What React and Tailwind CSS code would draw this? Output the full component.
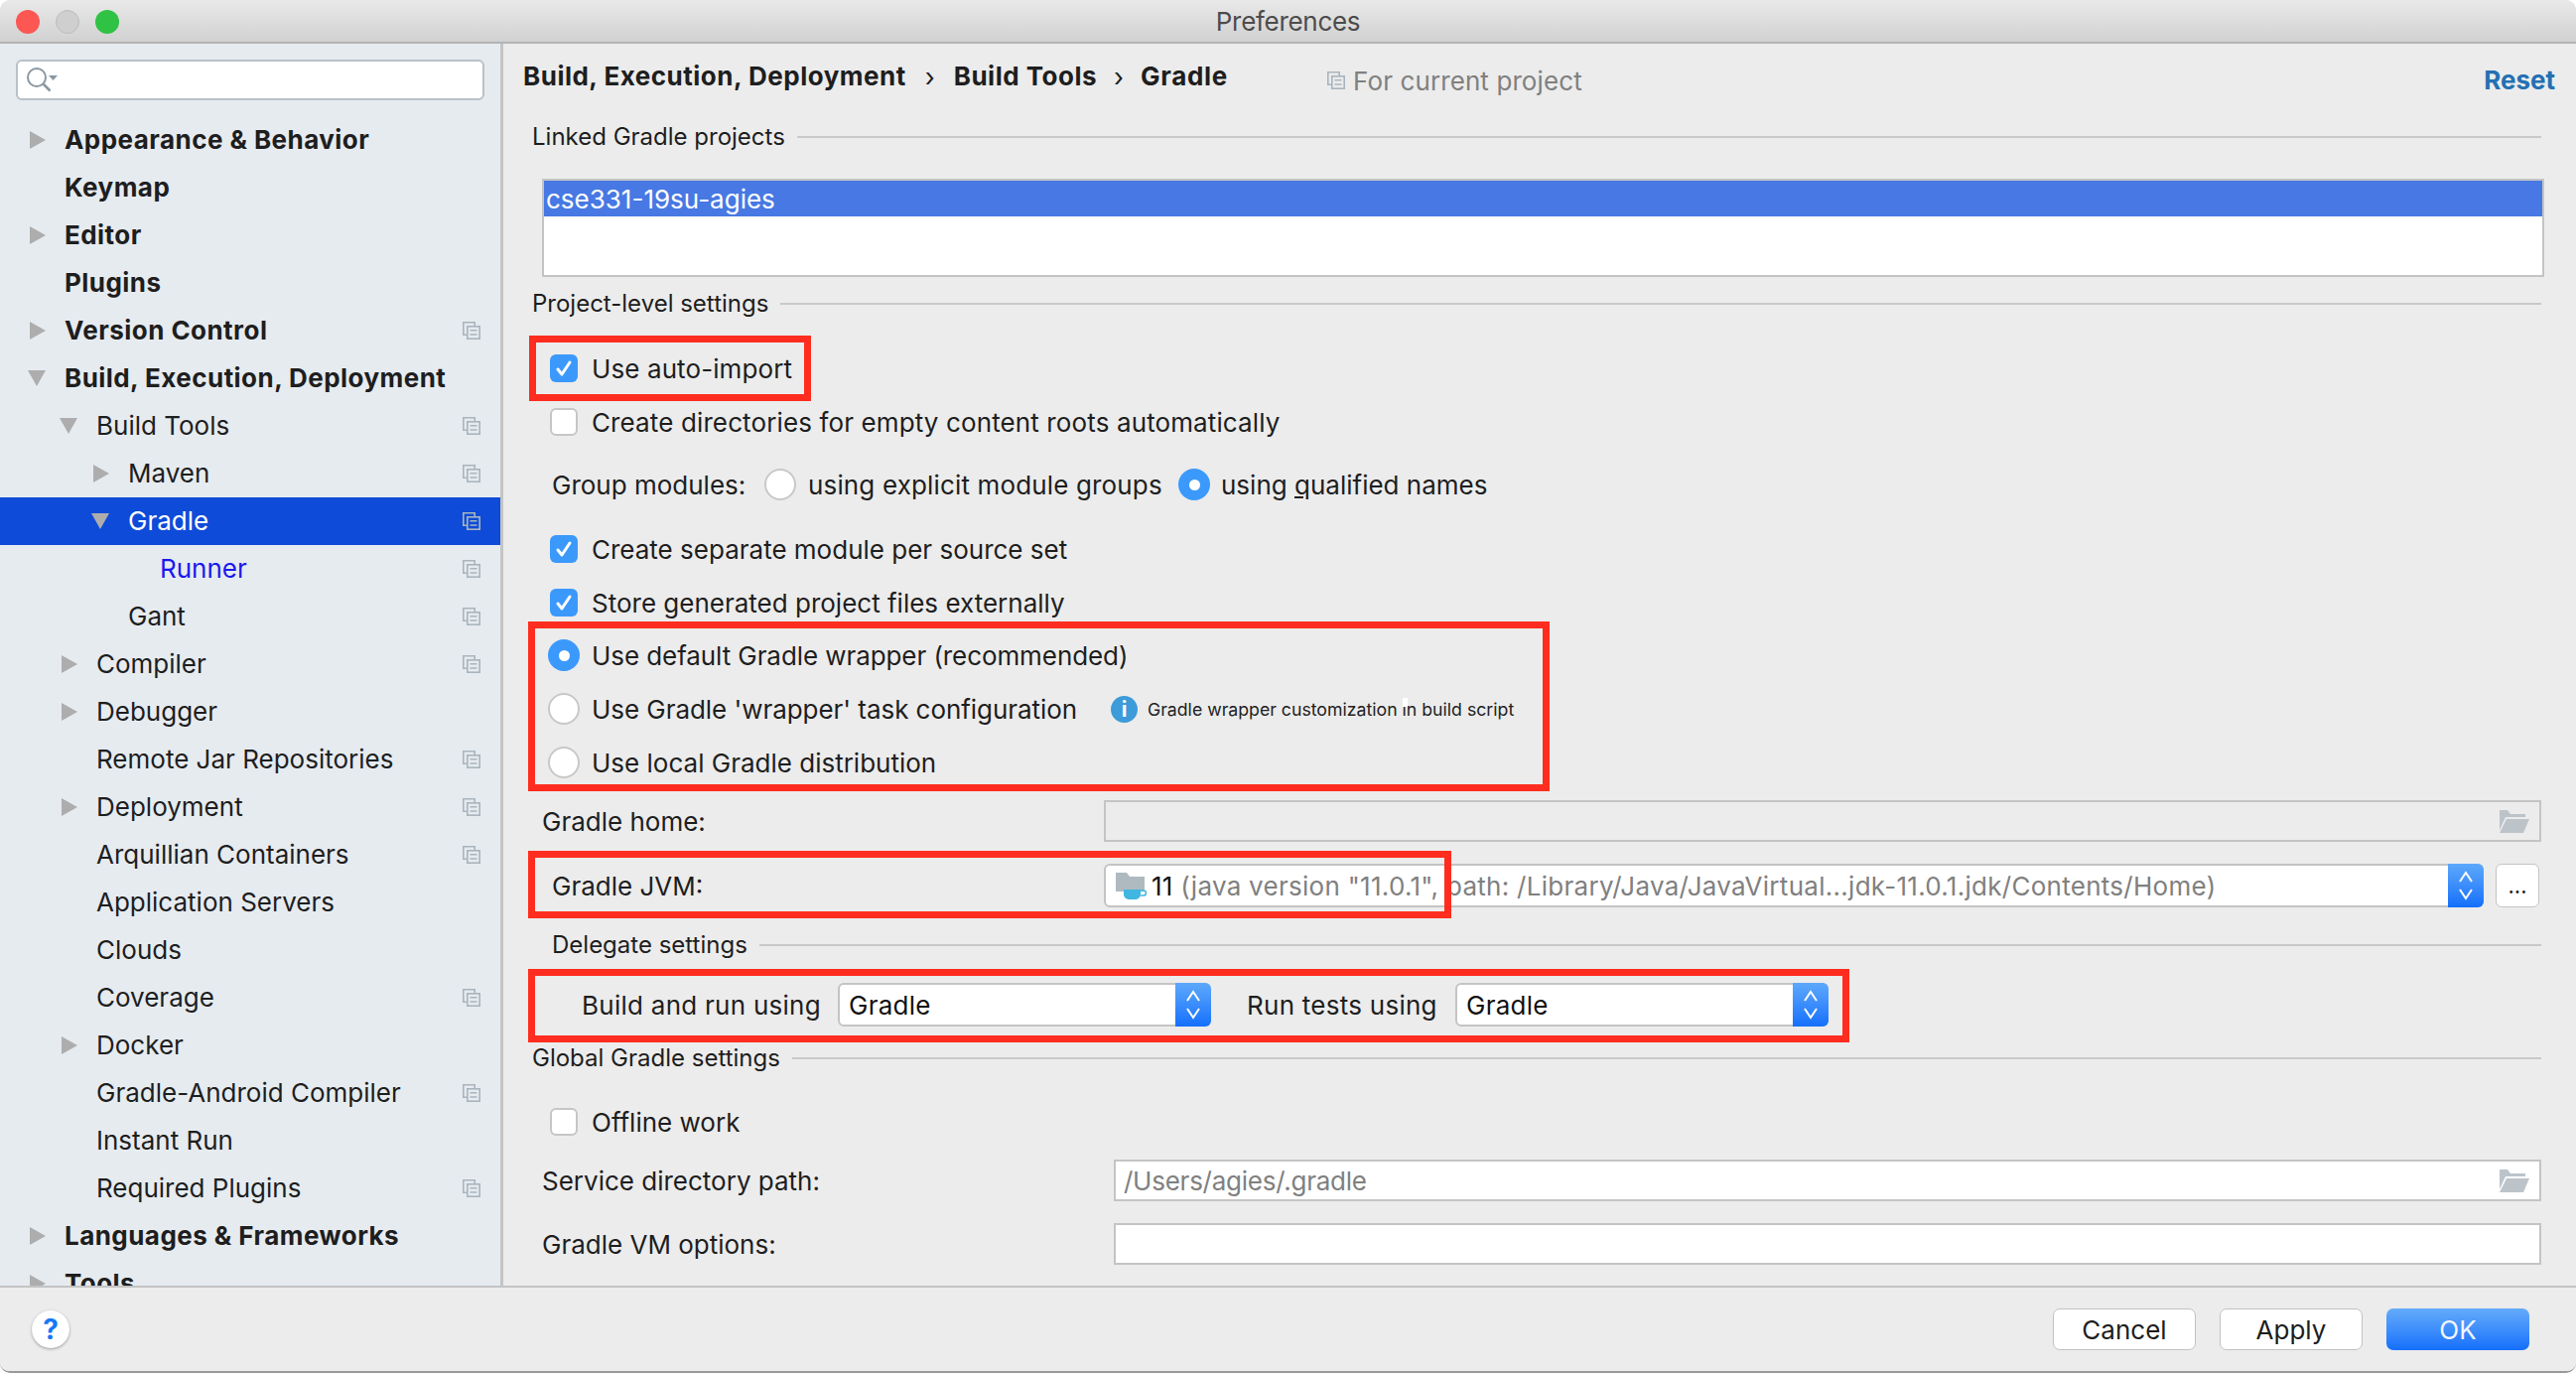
import React from "react";

const TREE = [
  { label: "Appearance & Behavior", level: 0, bold: true, arrow: "right" },
  { label: "Keymap", level: 0, bold: true },
  { label: "Editor", level: 0, bold: true, arrow: "right" },
  { label: "Plugins", level: 0, bold: true },
  { label: "Version Control", level: 0, bold: true, arrow: "right", copy: true },
  { label: "Build, Execution, Deployment", level: 0, bold: true, arrow: "down" },
  { label: "Build Tools", level: 1, arrow: "down", copy: true },
  { label: "Maven", level: 2, arrow: "right", copy: true },
  { label: "Gradle", level: 2, arrow: "down", copy: true, selected: true },
  { label: "Runner", level: 3, copy: true, link: true },
  { label: "Gant", level: 2, copy: true },
  { label: "Compiler", level: 1, arrow: "right", copy: true },
  { label: "Debugger", level: 1, arrow: "right" },
  { label: "Remote Jar Repositories", level: 1, copy: true },
  { label: "Deployment", level: 1, arrow: "right", copy: true },
  { label: "Arquillian Containers", level: 1, copy: true },
  { label: "Application Servers", level: 1 },
  { label: "Clouds", level: 1 },
  { label: "Coverage", level: 1, copy: true },
  { label: "Docker", level: 1, arrow: "right" },
  { label: "Gradle-Android Compiler", level: 1, copy: true },
  { label: "Instant Run", level: 1 },
  { label: "Required Plugins", level: 1, copy: true },
  { label: "Languages & Frameworks", level: 0, bold: true, arrow: "right" },
  { label: "Tools", level: 0, bold: true, arrow: "right" },
];

const INDENT = ["pl-[28px]", "pl-[60px]", "pl-[92px]", "pl-[124px]"];

function CopyIcon({ className = "" }) {
  return (
    <svg width="18" height="18" viewBox="0 0 18 18" fill="none" stroke="#a9b5be" strokeWidth="1.6" className={className}>
      <path d="M4.5 13.2H.8V.8h11.4v3.7" />
      <rect x="4.8" y="4.8" width="12.4" height="12.4" />
      <path d="M7.5 8.8h7M7.5 13h7" />
    </svg>
  );
}

function Arrow({ dir }) {
  if (dir === "right") {
    return (
      <svg width="16" height="18" viewBox="0 0 16 18" className="ml-[2px]">
        <path d="M0 0l16 9-16 9z" fill="#adadad" />
      </svg>
    );
  }
  return (
    <svg width="18" height="16" viewBox="0 0 18 16">
      <path d="M0 0h18L9 16z" fill="#adadad" />
    </svg>
  );
}

function TreeRow({ item }) {
  let tone = "text-[#1e1e1e]";
  if (item.selected) tone = "bg-[#0e4bd8] text-white";
  if (item.link) tone = "text-[#1a1aee]";
  return (
    <div className={`flex h-[48px] shrink-0 items-center pr-[20px] ${INDENT[item.level]} ${tone}`}>
      <div className="flex w-[37px] shrink-0 items-center">{item.arrow && <Arrow dir={item.arrow} />}</div>
      <span className={`flex-1 pb-[2px] text-[26px] whitespace-nowrap ${item.bold ? "font-bold tracking-[0.45px]" : ""}`}>{item.label}</span>
      {item.copy && <CopyIcon />}
    </div>
  );
}

function Checkbox({ checked }) {
  if (!checked) {
    return <div className="h-[28px] w-[28px] shrink-0 rounded-[6px] border-2 border-[#c6c6c6] bg-white" />;
  }
  return (
    <div className="flex h-[28px] w-[28px] shrink-0 items-center justify-center rounded-[6px] bg-[#3b99fc]">
      <svg width="20" height="20" viewBox="0 0 20 20" fill="none" stroke="#fff" strokeWidth="3" strokeLinecap="round" strokeLinejoin="round">
        <path d="M4 11l4 5 8-12" />
      </svg>
    </div>
  );
}

function Radio({ checked }) {
  if (!checked) {
    return <div className="h-[32px] w-[32px] shrink-0 rounded-full border-2 border-[#c8c8c8] bg-white" />;
  }
  return (
    <div className="flex h-[32px] w-[32px] shrink-0 items-center justify-center rounded-full bg-[#3b99fc]">
      <div className="h-[11px] w-[11px] rounded-full bg-white" />
    </div>
  );
}

function SectionTitle({ children, className = "" }) {
  return (
    <div className={`flex h-[40px] shrink-0 items-center ${className}`}>
      <span className="text-[24px] whitespace-nowrap">{children}</span>
      <div className="ml-[12px] h-[2px] flex-1 bg-[#c9c9c9]" />
    </div>
  );
}

function Option({ control, children, className = "" }) {
  return (
    <div className={`flex h-[54px] shrink-0 items-center whitespace-nowrap ${className}`}>
      {control}
      {children}
    </div>
  );
}

function Stepper() {
  return (
    <div className="flex h-[44px] w-[36px] shrink-0 items-center justify-center rounded-r-[6px] bg-gradient-to-b from-[#5da8fb] to-[#136ffb]">
      <svg width="18" height="32" viewBox="0 0 18 32" fill="none" stroke="#fff" strokeWidth="2">
        <path d="M3 12l6-9 6 9M3 20l6 9 6-9" />
      </svg>
    </div>
  );
}

function OpenFolder() {
  return (
    <svg width="30" height="23" viewBox="0 0 30 23">
      <path d="M0 0h8l3 4h15v3H6L0 20z" fill="#bcc4ca" />
      <path d="M7 9h23l-6 14H0z" fill="#bcc4ca" />
    </svg>
  );
}

function JdkFolder() {
  return (
    <svg width="31" height="27" viewBox="0 0 31 27" className="shrink-0">
      <path d="M0 0h11l3 4h15v15H0z" fill="#afb9c0" />
      <path d="M8 17h17v5c0 3-3 5-6 5h-5c-3 0-6-2-6-5z" fill="#40b6e0" />
      <path d="M25 18h3a2.4 2.4 0 010 5h-3" fill="none" stroke="#40b6e0" strokeWidth="1.6" />
    </svg>
  );
}

function ActionButton({ children }) {
  return (
    <div className="flex h-[42px] w-[144px] items-center justify-center rounded-[7px] border border-[#c2c2c2] bg-white text-[#1e1e1e]">
      {children}
    </div>
  );
}

function RedBox({ className }) {
  return <div className={`absolute border-[7px] border-[#fe2d1f] ${className}`} />;
}

function Sidebar() {
  return (
    <div className="flex w-[507px] shrink-0 flex-col overflow-hidden border-r-[3px] border-[#c4c4c4] bg-[#e6ebf0]">
      <div className="mx-[16px] mt-[16px] mb-[16px] flex h-[41px] shrink-0 items-center rounded-[6px] border-2 border-[#b9c1c8] bg-white pl-[8px]">
        <svg width="34" height="26" viewBox="0 0 34 26" fill="none" stroke="#8a98a3" strokeWidth="2">
          <circle cx="11" cy="10" r="9" />
          <path d="M17.5 16.5l7 7" strokeWidth="2.6" />
          <path d="M23 8h9l-4.5 5z" fill="#8a98a3" stroke="none" />
        </svg>
      </div>
      {TREE.map((item) => (
        <TreeRow key={item.label} item={item} />
      ))}
    </div>
  );
}

function Settings() {
  return (
    <div className="flex min-w-0 flex-1 flex-col pr-[35px] pl-[20px] text-[26px] text-[#1e1e1e]">
      <div className="flex h-[66px] shrink-0 items-center whitespace-nowrap">
        <span className="pb-[1px] font-bold tracking-[0.5px]">Build, Execution, Deployment</span>
        <span className="mx-[18px] w-[12px] text-center">›</span>
        <span className="pb-[1px] font-bold tracking-[0.5px]">Build Tools</span>
        <span className="mx-[16px] w-[12px] text-center">›</span>
        <span className="pb-[1px] font-bold tracking-[0.7px]">Gradle</span>
        <CopyIcon className="mt-[8px] ml-[100px]" />
        <span className="mt-[8px] ml-[8px] tracking-[0.1px] text-[#808080]">For current project</span>
        <span className="mt-[6px] ml-auto mr-[-14px] font-bold text-[#2470b3]">Reset</span>
      </div>

      <SectionTitle className="mt-[8px] ml-[9px]">Linked Gradle projects</SectionTitle>
      <div className="mt-[22px] mr-[-3px] ml-[19px] h-[99px] shrink-0 border-2 border-[#c4c4c4] bg-white">
        <div className="flex h-[36px] items-center bg-[#4778e3] pl-[2px] text-white">cse331-19su-agies</div>
      </div>

      <SectionTitle className="mt-[7px] ml-[9px]">Project-level settings</SectionTitle>
      <Option className="mt-[18px] ml-[27px]" control={<Checkbox checked />}>
        <span className="ml-[14px] tracking-[0.1px]">Use auto-import</span>
      </Option>
      <Option className="ml-[27px]" control={<Checkbox />}>
        <span className="ml-[14px] tracking-[0.12px]">Create directories for empty content roots automatically</span>
      </Option>
      <Option className="mt-[9px] ml-[29px]" control={<span className="w-[214px]">Group modules:</span>}>
        <Radio />
        <span className="ml-[12px] w-[373px] tracking-[0.15px]">using explicit module groups</span>
        <Radio checked />
        <span className="ml-[11px]">
          using <span className="underline">q</span>ualified names
        </span>
      </Option>
      <Option className="mt-[11px] ml-[27px]" control={<Checkbox checked />}>
        <span className="ml-[14px]">Create separate module per source set</span>
      </Option>
      <Option className="ml-[27px]" control={<Checkbox checked />}>
        <span className="ml-[14px]">Store generated project files externally</span>
      </Option>
      <Option className="mt-[-1px] ml-[25px]" control={<Radio checked />}>
        <span className="ml-[12px] tracking-[-0.08px]">Use default Gradle wrapper (recommended)</span>
      </Option>
      <Option className="ml-[25px]" control={<Radio />}>
        <span className="ml-[12px] w-[523px] tracking-[-0.05px]">Use Gradle 'wrapper' task configuration</span>
        <div className="flex h-[27px] w-[27px] shrink-0 items-center justify-center rounded-full bg-[#3d9bd9] text-[21px] leading-none font-bold text-white">
          i
        </div>
        <span className="ml-[10px] pt-[2px] text-[17.7px] text-[#222222]">Gradle wrapper customization in build script</span>
      </Option>
      <Option className="ml-[25px]" control={<Radio />}>
        <span className="ml-[12px]">Use local Gradle distribution</span>
      </Option>

      <div className="mt-[11px] ml-[19px] flex h-[42px] shrink-0 items-center">
        <span className="w-[566px]">Gradle home:</span>
        <div className="flex h-[42px] flex-1 items-center justify-end border-2 border-[#c4c4c4] pr-[10px]">
          <OpenFolder />
        </div>
      </div>

      <div className="mt-[22px] ml-[29px] flex h-[44px] shrink-0 items-center">
        <span className="w-[556px]">Gradle JVM:</span>
        <div className="flex h-[44px] min-w-0 flex-1 items-center rounded-[6px] border-2 border-[#c4c4c4] bg-white pl-[10px] whitespace-nowrap">
          <JdkFolder />
          <span className="ml-[5px] flex-1 tracking-[0.28px] text-[#808080]">
            <span className="text-[#111111]">11</span> (java version "11.0.1", path: /Library/Java/JavaVirtual...jdk-11.0.1.jdk/Contents/Home)
          </span>
          <div className="mr-[-2px]">
            <Stepper />
          </div>
        </div>
        <div className="ml-[12px] mr-[2px] flex h-[44px] w-[44px] shrink-0 items-center justify-center rounded-[6px] border border-[#c4c4c4] bg-white text-[22px]">
          ...
        </div>
      </div>

      <SectionTitle className="mt-[18px] ml-[29px]">Delegate settings</SectionTitle>

      <div className="mt-[18px] ml-[59px] flex h-[44px] shrink-0 items-center tracking-[0.26px] whitespace-nowrap">
        <span className="w-[258px]">Build and run using</span>
        <div className="flex h-[44px] w-[376px] items-center justify-between rounded-[6px] border-2 border-[#c4c4c4] bg-white pl-[9px] text-[#111111]">
          Gradle
          <div className="mr-[-2px]">
            <Stepper />
          </div>
        </div>
        <span className="ml-[36px] w-[210px]">Run tests using</span>
        <div className="flex h-[44px] w-[376px] items-center justify-between rounded-[6px] border-2 border-[#c4c4c4] bg-white pl-[9px] text-[#111111]">
          Gradle
          <div className="mr-[-2px]">
            <Stepper />
          </div>
        </div>
      </div>

      <SectionTitle className="mt-[12px] ml-[9px]">Global Gradle settings</SectionTitle>
      <Option className="mt-[17px] ml-[27px]" control={<Checkbox />}>
        <span className="ml-[14px]">Offline work</span>
      </Option>
      <div className="mt-[11px] ml-[19px] flex h-[42px] shrink-0 items-center">
        <span className="w-[576px]">Service directory path:</span>
        <div className="flex h-[42px] flex-1 items-center justify-between border-2 border-[#c4c4c4] bg-white pr-[10px] pl-[8px] tracking-[-0.25px] text-[#808080]">
          /Users/agies/.gradle
          <OpenFolder />
        </div>
      </div>
      <div className="mt-[22px] ml-[19px] flex h-[42px] shrink-0 items-center">
        <span className="w-[576px]">Gradle VM options:</span>
        <div className="h-[42px] flex-1 border-2 border-[#c4c4c4] bg-white" />
      </div>
    </div>
  );
}

export default function App() {
  return (
    <div className="relative h-[1383px] w-[2595px] overflow-hidden bg-white [font-family:Inter,'Liberation_Sans',sans-serif]">
      <div className="flex h-full flex-col overflow-hidden rounded-[10px] border-b-2 border-[#9a9a9a] bg-[#ececec]">
        <div className="relative flex h-[44px] shrink-0 items-center justify-center border-b-2 border-[#b4b4b4] bg-gradient-to-b from-[#e9e9e9] to-[#d1d1d1] text-[26px] tracking-[-0.3px] text-[#4c4c4c]">
          <div className="absolute top-[10px] left-[16px] flex gap-[16px]">
            <div className="h-[24px] w-[24px] rounded-full bg-[#fc5753]" />
            <div className="h-[24px] w-[24px] rounded-full border border-[#bcbcbc] bg-[#cfcfcf]" />
            <div className="h-[24px] w-[24px] rounded-full bg-[#2fc244]" />
          </div>
          Preferences
        </div>

        <div className="flex min-h-0 flex-1">
          <Sidebar />
          <Settings />
        </div>

        <div className="flex h-[86px] shrink-0 items-center border-t-2 border-[#c4c4c4] bg-[#ececec] pr-[47px] pl-[32px] text-[26px]">
          <div className="flex h-[38px] w-[38px] items-center justify-center rounded-full bg-white text-[28px] font-bold text-[#1678f5] shadow-[0_1px_3px_rgba(0,0,0,0.35)]">
            ?
          </div>
          <div className="ml-auto flex gap-[24px]">
            <ActionButton>Cancel</ActionButton>
            <ActionButton>Apply</ActionButton>
            <div className="flex h-[42px] w-[144px] items-center justify-center rounded-[7px] bg-gradient-to-b from-[#64abfa] to-[#136ffb] text-[#f2f6fd]">
              OK
            </div>
          </div>
        </div>
      </div>

      <RedBox className="top-[338px] left-[533px] h-[66px] w-[284px]" />
      <RedBox className="top-[626px] left-[532px] h-[171px] w-[1029px]" />
      <RedBox className="top-[857px] left-[532px] h-[68px] w-[930px]" />
      <RedBox className="top-[976px] left-[532px] h-[74px] w-[1331px]" />
      <div className="absolute top-[703px] left-[1413px] h-[9px] w-[5px] bg-white" />
    </div>
  );
}
